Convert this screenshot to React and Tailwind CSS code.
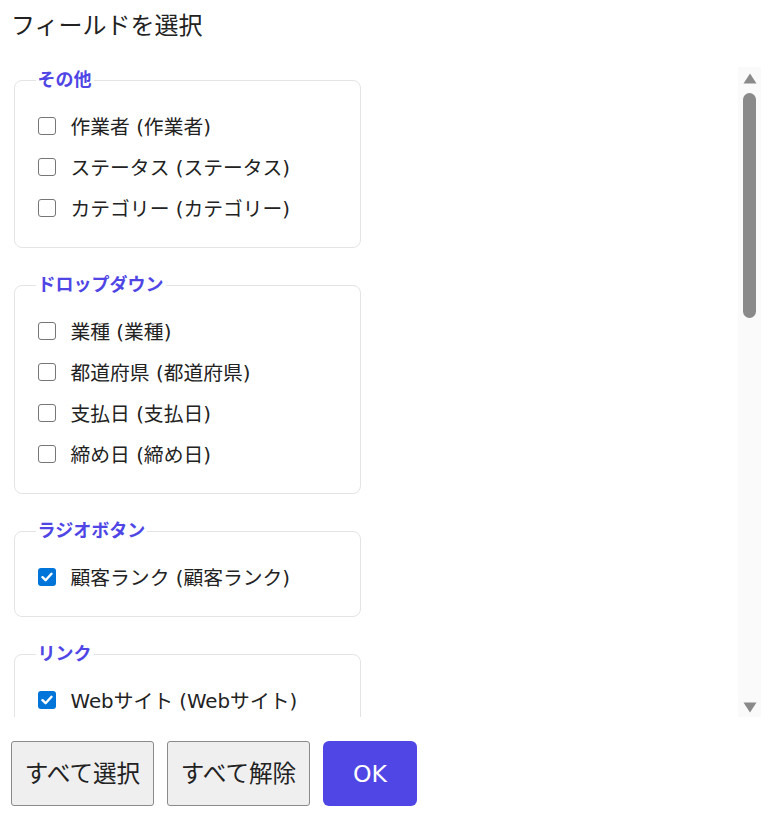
import { useState } from 'react'

const GROUPS = [
  {
    title: 'その他',
    fields: [
      { id: 'worker', label: '作業者 (作業者)', checked: false },
      { id: 'status', label: 'ステータス (ステータス)', checked: false },
      { id: 'category', label: 'カテゴリー (カテゴリー)', checked: false },
    ],
  },
  {
    title: 'ドロップダウン',
    fields: [
      { id: 'industry', label: '業種 (業種)', checked: false },
      { id: 'pref', label: '都道府県 (都道府県)', checked: false },
      { id: 'payday', label: '支払日 (支払日)', checked: false },
      { id: 'closing', label: '締め日 (締め日)', checked: false },
    ],
  },
  {
    title: 'ラジオボタン',
    fields: [{ id: 'rank', label: '顧客ランク (顧客ランク)', checked: true }],
  },
  {
    title: 'リンク',
    fields: [{ id: 'web', label: 'Webサイト (Webサイト)', checked: true }],
  },
]

function Box({ checked, onChange }) {
  // hand-drawn checkbox so it looks the same everywhere
  return (
    <span
      onClick={onChange}
      className={
        checked
          ? 'w-[18px] h-[18px] shrink-0 rounded-[3px] bg-[#0075d9] flex items-center justify-center cursor-pointer'
          : 'w-[18px] h-[18px] shrink-0 rounded-[3px] border-[1.5px] border-[#767676] bg-white cursor-pointer'
      }
    >
      {checked && (
        <svg width="12" height="10" viewBox="0 0 12 10">
          <path d="M1.5 5.2 L4.6 8.2 L10.5 1.8" fill="none" stroke="white" strokeWidth="2.4" strokeLinecap="round" strokeLinejoin="round" />
        </svg>
      )}
    </span>
  )
}

function Group({ group, state, toggle }) {
  return (
    <fieldset className="w-[347px] ml-[3px] border border-[#e4e4e7] rounded-lg pl-[22.5px] pr-[22px] pt-[13px] pb-[19px]">
      <legend className="-ml-[2px] px-[2px] text-[18px] leading-6 font-bold text-[#4f46e5]">{group.title}</legend>
      {group.fields.map((f) => (
        <label key={f.id} className="h-[41px] flex items-center gap-4 text-[19.8px] leading-7 text-[#222] cursor-pointer">
          <Box checked={state[f.id]} onChange={() => toggle(f.id)} />
          <span className="pt-[5px] -ml-[1px]">{f.label}</span>
        </label>
      ))}
    </fieldset>
  )
}

function Scrollbar() {
  return (
    <div className="w-[23px] shrink-0 bg-[#fafafa] flex flex-col items-center pt-[6px] pb-[4px]">
      <svg width="14" height="11" viewBox="0 0 14 11">
        <path d="M7 0.5 L13.5 10.5 L0.5 10.5 Z" fill="#8a8a8a" />
      </svg>
      <div className="mt-[9px] w-[13px] h-[225px] rounded-full bg-[#8a8a8a]" />
      <div className="flex-1" />
      <svg width="14" height="11" viewBox="0 0 14 11">
        <path d="M0.5 0.5 L13.5 0.5 L7 10.5 Z" fill="#8a8a8a" />
      </svg>
    </div>
  )
}

export default function App() {
  const [state, setState] = useState(() => {
    const s = {}
    GROUPS.forEach((g) => g.fields.forEach((f) => (s[f.id] = f.checked)))
    return s
  })

  const toggle = (id) => setState((s) => ({ ...s, [id]: !s[id] }))
  const setAll = (v) =>
    setState((s) => {
      const n = {}
      Object.keys(s).forEach((k) => (n[k] = v))
      return n
    })

  return (
    <div className="w-[779px] h-[816px] bg-white px-[11px] pt-[10px] font-['DejaVu_Sans','Noto_Sans_CJK_JP',sans-serif] overflow-hidden">
      <h1 className="text-[24px] leading-8 text-[#222] font-normal">フィールドを選択</h1>

      <div className="mt-[25px] w-[750px] h-[650px] flex">
        <div className="flex-1 overflow-hidden pt-[1px]">
          <div className="flex flex-col gap-[25px]">
            {GROUPS.map((g) => (
              <Group key={g.title} group={g} state={state} toggle={toggle} />
            ))}
          </div>
        </div>
        <Scrollbar />
      </div>

      <div className="mt-[24px] flex gap-[13px]">
        <button
          onClick={() => setAll(true)}
          className="w-[143px] h-[65px] rounded-[3px] border border-[#8a8a8a] bg-[#efefef] text-[23.6px] leading-8 text-[#222]"
        >
          すべて選択
        </button>
        <button
          onClick={() => setAll(false)}
          className="w-[143px] h-[65px] rounded-[3px] border border-[#8a8a8a] bg-[#efefef] text-[23.6px] leading-8 text-[#222]"
        >
          すべて解除
        </button>
        <button className="w-[94px] h-[65px] rounded-md bg-[#4f46e5] text-[23.6px] leading-8 text-white">OK</button>
      </div>
    </div>
  )
}
